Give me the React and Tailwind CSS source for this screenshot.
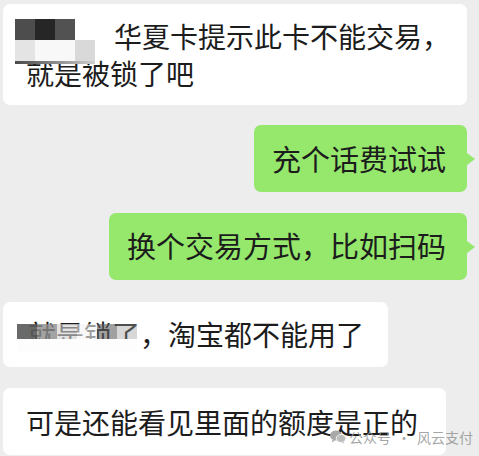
import React from "react";

const font = { fontFamily: '"Noto Sans CJK SC", "Noto Sans", sans-serif' };

function Tail() {
  return (
    <span className="absolute right-[-8px] top-1/2 -translate-y-1/2 w-0 h-0 border-y-[6px] border-y-transparent border-l-[8px] border-l-[#95e86b]" />
  );
}

export default function App() {
  return (
    <div
      className="relative w-[479px] h-[456px] overflow-hidden bg-[#ededed] flex flex-col pt-[4px] pl-[3px] pr-[12px] text-[#1c1c1c]"
      style={font}
    >
      {/* Bubble 1 */}
      <div className="relative self-start w-[464px] rounded-[7px] bg-white pl-[23px] pt-[14px] pb-[13px] text-[28px] leading-[37px] whitespace-nowrap">
        <div className="indent-[88px]">华夏卡提示此卡不能交易，</div>
        <div>就是被锁了吧</div>
        {/* mosaic */}
        <div className="absolute left-[12px] top-[15px] flex flex-col">
          <div className="flex h-[21px]">
            <div className="w-[20px] bg-[#4d4d4d]" />
            <div className="w-[20px] bg-[#262626]" />
            <div className="w-[20px] bg-[#525252]" />
          </div>
          <div className="flex h-[21px]">
            <div className="w-[20px] bg-[#e4e4e4]" />
            <div className="w-[40px] bg-[#f8f8f8]" />
            <div className="w-[20px] bg-[#d9d9d9]" />
          </div>
          <div className="h-[3px] w-[80px] bg-gradient-to-r from-[#4a4a4a] via-[#8a8a8a] to-[#cfcfcf]" />
        </div>
      </div>

      {/* Bubble 2 */}
      <div className="relative self-end mt-[20px] rounded-[7px] bg-[#95e86b] pl-[18px] pr-[21px] pt-[15px] pb-[15px] text-[29px] leading-[37px] whitespace-nowrap">
        充个话费试试
        <Tail />
      </div>

      {/* Bubble 3 */}
      <div className="relative self-end mt-[21px] rounded-[7px] bg-[#95e86b] pl-[18px] pr-[21px] pt-[14px] pb-[16px] text-[29px] leading-[37px] whitespace-nowrap">
        换个交易方式，比如扫码
        <Tail />
      </div>

      {/* Bubble 4 */}
      <div className="relative self-start mt-[22px] w-[385px] rounded-[7px] bg-white pl-[25px] pt-[14px] pb-[14px] text-[28px] leading-[37px] whitespace-nowrap">
        就是锁了，淘宝都不能用了
        <div className="absolute left-[14px] top-[22px] flex h-[15px]">
          <div className="w-[20px] bg-[#5a5a5a]/90" />
          <div className="w-[20px] bg-[#8c8c8c]/80" />
          <div className="w-[20px] bg-[#cfcfcf]/60" />
          <div className="w-[20px] bg-[#f4f4f4]/60" />
          <div className="w-[20px] bg-[#606060]/60" />
          <div className="w-[20px] bg-[#9a9a9a]/40" />
        </div>
        <div className="absolute left-[14px] top-[37px] w-[120px] h-[14px] bg-[#fdfdfd]" />
      </div>

      {/* Bubble 5 */}
      <div className="relative self-start mt-[21px] w-[443px] rounded-[7px] bg-white pl-[23px] pt-[16px] pb-[14px] text-[28px] leading-[37px] whitespace-nowrap">
        可是还能看见里面的额度是正的
      </div>

      {/* Watermark */}
      <div className="absolute left-[330px] top-[429px] flex items-center gap-[3px] text-[14px] leading-[16px] text-[#9a9a9a]/90">
        <svg width="16" height="14" viewBox="0 0 16 14" fill="#a8a8a8">
          <ellipse cx="6" cy="5.5" rx="6" ry="5" />
          <path d="M2.5 9.5 L2 12.5 L5 10.2 Z" />
          <ellipse cx="11" cy="8.5" rx="4.8" ry="4" fill="#bdbdbd" stroke="#ffffff" strokeWidth="0.8" />
          <path d="M13.5 11.8 L14.3 13.8 L11.8 12.3 Z" fill="#bdbdbd" />
        </svg>
        <span>公众号</span>
        <span className="mx-[3px]">·</span>
        <span>风云支付</span>
      </div>
    </div>
  );
}
